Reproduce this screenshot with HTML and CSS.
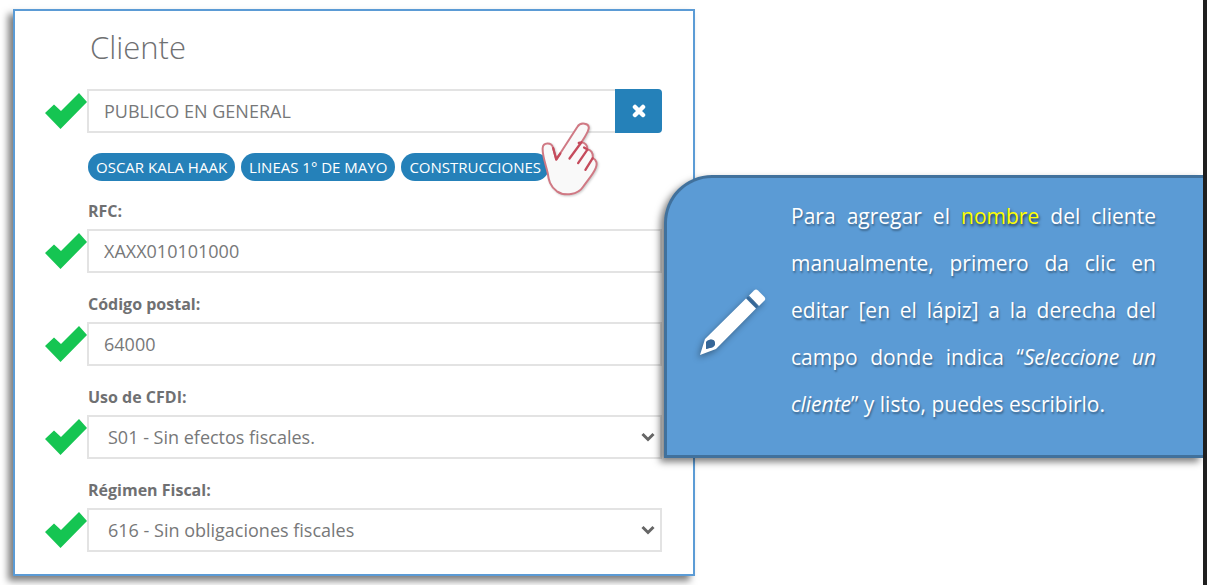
FILE: index.html
```
<!DOCTYPE html>
<html lang="es">
<head>
    <meta charset="UTF-8">
    <meta name="viewport" content="width=device-width, initial-scale=1.0">
    <title>Cliente</title>
    <link rel="stylesheet" href="styles.css">
</head>
<body>
    <svg class="symbols" aria-hidden="true">
        <symbol id="check" viewBox="0 0 42 36">
            <path d="M0 20 L9 11.500 L16 18 L34 0 L42 9 L15.500 36 Z" fill="#15c552"/>
        </symbol>
        <symbol id="chevron" viewBox="0 0 14 10">
            <path d="M1.500 2 L7 7.500 L12.500 2" fill="none" stroke="#666" stroke-width="3"/>
        </symbol>
    </svg>

    <main class="slide">
        <form class="card">
            <h1>Cliente</h1>

            <div class="row">
                <svg class="check"><use href="#check"/></svg>
                <div class="input-group">
                    <input class="control" type="text" aria-label="Cliente" value="PUBLICO EN GENERAL">
                    <button class="clear" type="button" aria-label="Quitar cliente">
                        <svg width="14" height="14" viewBox="0 0 14 14">
                            <path d="M3 3 L11 11 M11 3 L3 11" stroke="#fff" stroke-width="4.500" stroke-linecap="round"/>
                        </svg>
                    </button>
                </div>
                <svg class="hand" viewBox="484 152 172 226">
                    <path d="M530 268 L594 169 C603 154 630 158 628 174 C626 186 614 204 606 216 C616 216 625 226 624 238 C634 238 642 248 640 264 C651 268 655 280 649 294 C641 314 623 332 610 352 C596 374 556 380 532 364 C511 348 507 330 504 308 C499 284 488 258 489 234 C490 215 516 216 520 232 Z" fill="#f9f9f9" stroke="#d07984" stroke-width="6" stroke-linejoin="round"/>
                    <path d="M521 234 L530 268 L542 250 M606 216 L570 265 M606 216 L598 218 M624 238 L596 279 M640 264 L618 299 M624 238 L614 232" fill="none" stroke="#c54b5c" stroke-width="7" stroke-linecap="round" stroke-linejoin="round"/>
                </svg>
            </div>

            <div class="chips">
                <button class="chip" type="button">OSCAR KALA HAAK</button>
                <button class="chip" type="button">LINEAS 1° DE MAYO</button>
                <button class="chip" type="button">CONSTRUCCIONES</button>
            </div>

            <label for="rfc">RFC:</label>
            <div class="row">
                <svg class="check"><use href="#check"/></svg>
                <input class="control" id="rfc" type="text" value="XAXX010101000">
            </div>

            <label for="cp">Código postal:</label>
            <div class="row">
                <svg class="check"><use href="#check"/></svg>
                <input class="control" id="cp" type="text" value="64000">
            </div>

            <label for="uso">Uso de CFDI:</label>
            <div class="row">
                <svg class="check"><use href="#check"/></svg>
                <div class="select">
                    <select class="control" id="uso">
                        <option>S01 - Sin efectos fiscales.</option>
                    </select>
                    <svg class="chevron"><use href="#chevron"/></svg>
                </div>
            </div>

            <label for="regimen">Régimen Fiscal:</label>
            <div class="row">
                <svg class="check"><use href="#check"/></svg>
                <div class="select">
                    <select class="control" id="regimen">
                        <option>616 - Sin obligaciones fiscales</option>
                    </select>
                    <svg class="chevron"><use href="#chevron"/></svg>
                </div>
            </div>
        </form>

        <aside class="callout">
            <svg class="pencil" viewBox="0 0 66 66">
                <path fill="#fff" fill-rule="evenodd" d="M0 66 L5 50 L46 9.500 L56 19.500 L16 60 Z M6 60 L12 58 C17 54 15 49 9 51 Z"/>
                <path fill="#366798" d="M6 60 L6 53 C9 49 16 51 15 56 C14 58 12 59 10 59 Z M46.500 9 L48 7.500 L58 17.500 L56.500 19 Z"/>
                <path fill="#fff" d="M49 6.500 L54 1.500 Q56 -0.500 58 1.500 L64.500 8 Q66 10 64.500 11.500 L59 17 Z"/>
            </svg>
            <p>Para agregar el <span class="highlight">nombre</span> del cliente manualmente, primero da clic en editar [en el lápiz] a la derecha del campo donde indica “<em>Seleccione un cliente</em>” y listo, puedes escribirlo.</p>
        </aside>
    </main>
</body>
</html>
```
FILE: styles.css
```
* {
    box-sizing: border-box;
}

body {
    margin: 0;
    background: #fff;
    color: #6f7072;
    font-family: "Open Sans", sans-serif;
    font-size: 18px;
}

.symbols {
    display: block;
    width: 0;
    height: 0;
}

.slide {
    display: grid;
    grid-template-columns: minmax(0, 682fr) minmax(0, 508fr);
    align-items: start;
    min-height: 100vh;
    padding: 9px 0 9px 13px;
    border-right: 4px solid #1f1f1f;
    overflow: hidden;
}

.card {
    padding: 14px 31px 22px 73px;
    border: 2px solid #5b9bd5;
    background: #fff;
    box-shadow: -5px 5px 7px rgba(0, 0, 0, 0.5);
}

h1 {
    margin: 0 0 20px 2px;
    font-size: 31px;
    font-weight: 300;
    line-height: 44px;
}

label {
    display: block;
    margin: 19px 0 6px;
    font-size: 16px;
    font-weight: 700;
    line-height: 24px;
}

.row {
    position: relative;
    display: flex;
    align-items: center;
    margin-left: -43px;
}

.check {
    flex: none;
    width: 42px;
    height: 36px;
}

.control {
    flex: 1;
    width: 100%;
    min-width: 0;
    height: 44px;
    padding: 0 15px;
    border: 2px solid #e3e3e3;
    border-radius: 0;
    background: #fff;
    color: #777879;
    font: inherit;
}

.input-group {
    flex: 1;
    display: flex;
}

.input-group .control {
    border-right: 0;
}

.clear {
    display: flex;
    align-items: center;
    justify-content: center;
    width: 47px;
    border: 0;
    border-radius: 0 4px 4px 0;
    background: #2581b9;
}

.select {
    flex: 1;
    display: grid;
    align-items: center;
}

.select .control,
.chevron {
    grid-area: 1 / 1;
}

.select .control {
    padding: 0 19px;
    appearance: none;
}

.chevron {
    justify-self: end;
    width: 14px;
    height: 10px;
    margin-right: 7px;
    pointer-events: none;
}

/* pointer lies over the field and the last chip */
.hand {
    position: absolute;
    top: 32px;
    right: 64px;
    width: 57px;
    height: 75px;
    filter: drop-shadow(1px 1px 1px rgba(0, 0, 0, 0.2));
    pointer-events: none;
    z-index: 1;
}

.chips {
    display: flex;
    gap: 6px;
    margin: 20px 0 -1px;
}

.chip {
    height: 28px;
    padding: 0 8px;
    border: 0;
    border-radius: 14px;
    background: #2581b9;
    color: #fff;
    font: inherit;
    font-size: 15px;
    white-space: nowrap;
}

.callout {
    position: relative;
    z-index: 2;
    display: flex;
    align-items: center;
    gap: 25px;
    margin: 166px 0 0 -31px;
    padding: 15px 47px 27px 33px;
    border: 3px solid #41719c;
    border-right: 0;
    border-radius: 48px 0 0 0;
    background: #5b9bd5;
    box-shadow: -4px 4px 7px rgba(0, 0, 0, 0.5);
}

.callout p {
    flex: 1;
    margin: 0;
    color: #fff;
    font-size: 21px;
    line-height: 47px;
    text-align: justify;
    text-shadow: 1px 2px 2px rgba(0, 0, 0, 0.35);
}

.callout .highlight {
    color: #ff0;
    text-shadow: 1px 2px 3px rgba(0, 0, 0, 0.7);
}

.pencil {
    flex: none;
    width: 66px;
    height: 66px;
    margin-top: 22px;
    overflow: visible;
    filter: drop-shadow(-2px 3px 3px rgba(0, 0, 0, 0.35));
}
```
